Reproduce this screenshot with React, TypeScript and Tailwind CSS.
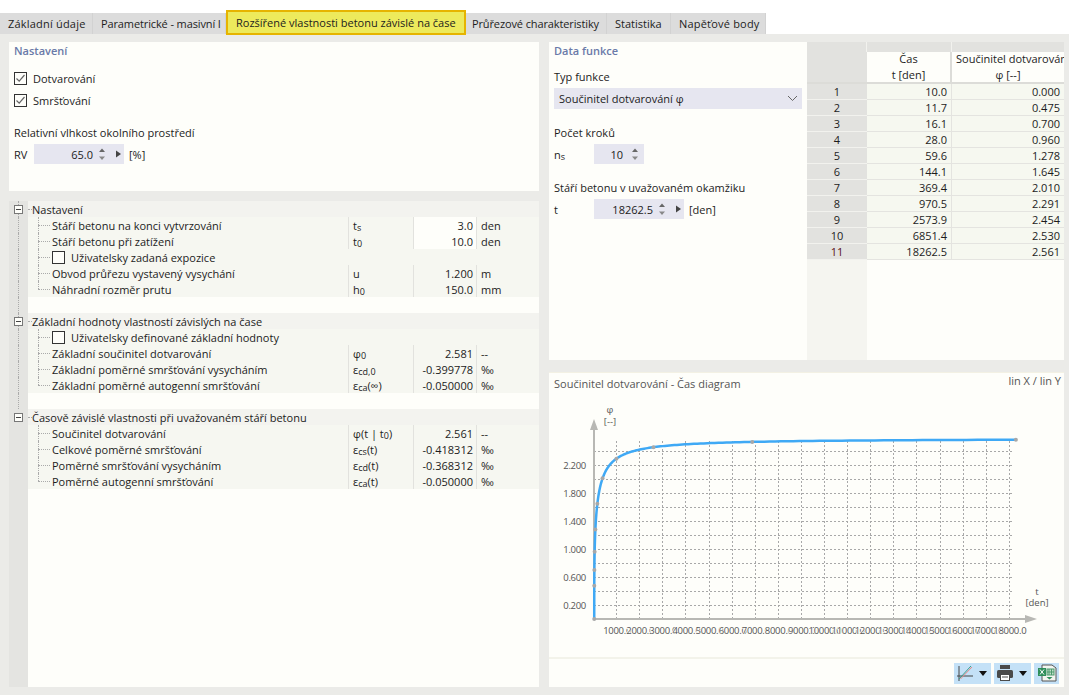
const font = "font-['Open_Sans',sans-serif]";

function Sub({ base, sub, rest }: { base: string; sub: string; rest?: string }) {
  return (
    <span>
      {base}
      <span className="relative top-[1px] text-[9px]">{sub}</span>
      {rest}
    </span>
  );
}

function Check({ checked }: { checked?: boolean }) {
  return (
    <span className="flex h-[13px] w-[13px] shrink-0 items-center justify-center border border-[#333] bg-[#fefefa]">
      {checked && (
        <svg width="11" height="11" viewBox="0 0 11 11">
          <path d="M1.5 5.5 L4.2 8.2 L9.5 2" fill="none" stroke="#666" strokeWidth="1.2" />
        </svg>
      )}
    </span>
  );
}

function Spinner({ arrow }: { arrow?: boolean }) {
  return (
    <svg width={arrow ? 28 : 12} height="14" viewBox={arrow ? '0 0 28 14' : '0 0 12 14'} className="shrink-0">
      <path d="M3 5 L6 1.5 L9 5 Z" fill="#666" />
      <path d="M3 9.500 L9 9.500 L6 13 Z" fill="#888" />
      {arrow && <path d="M20 3.500 L25 7 L20 10.500 Z" fill="#444" />}
    </svg>
  );
}

const tabs = [
  { label: 'Základní údaje', w: 'w-[93px] pl-[8px] tracking-[0.2px]' },
  { label: 'Parametrické - masivní I', w: 'w-[133px] pl-[8px] tracking-[-0.12px]' },
];
const tabsAfter = [
  { label: 'Průřezové charakteristiky', w: 'w-[141px] pl-[6px] tracking-[-0.12px]' },
  { label: 'Statistika', w: 'w-[64px] pl-[8px]' },
  { label: 'Napěťové body', w: 'w-[95px] pl-[8px] tracking-[0.2px]' },
];

function Tab({ label, w }: { label: string; w: string }) {
  return (
    <div className={`mt-[3px] flex h-[21px] items-center border-r border-[#d2d2d2] bg-[#dcdcdc] whitespace-nowrap ${w}`}>
      {label}
    </div>
  );
}

type Row = { label: React.ReactNode; sym?: React.ReactNode; val?: string; unit?: string; check?: boolean; edit?: boolean };

const groups: { title: string; rows: Row[] }[] = [
  {
    title: 'Nastavení',
    rows: [
      { label: 'Stáří betonu na konci vytvrzování', sym: <Sub base="t" sub="s" />, val: '3.0', unit: 'den', edit: true },
      { label: 'Stáří betonu při zatížení', sym: <Sub base="t" sub="0" />, val: '10.0', unit: 'den', edit: true },
      { label: 'Uživatelsky zadaná expozice', check: true },
      { label: 'Obvod průřezu vystavený vysychání', sym: 'u', val: '1.200', unit: 'm' },
      { label: 'Náhradní rozměr prutu', sym: <Sub base="h" sub="0" />, val: '150.0', unit: 'mm' },
    ],
  },
  {
    title: 'Základní hodnoty vlastností závislých na čase',
    rows: [
      { label: 'Uživatelsky definované základní hodnoty', check: true },
      { label: 'Základní součinitel dotvarování', sym: <Sub base="φ" sub="0" />, val: '2.581', unit: '--' },
      { label: 'Základní poměrné smršťování vysycháním', sym: <Sub base="ε" sub="cd,0" />, val: '-0.399778', unit: '‰' },
      { label: 'Základní poměrné autogenní smršťování', sym: <Sub base="ε" sub="ca" rest="(∞)" />, val: '-0.050000', unit: '‰' },
    ],
  },
  {
    title: 'Časově závislé vlastnosti při uvažovaném stáří betonu',
    rows: [
      { label: 'Součinitel dotvarování', sym: <span>φ(t | t<span className="relative top-[1px] text-[9px]">0</span>)</span>, val: '2.561', unit: '--' },
      { label: 'Celkové poměrné smršťování', sym: <Sub base="ε" sub="cs" rest="(t)" />, val: '-0.418312', unit: '‰' },
      { label: 'Poměrné smršťování vysycháním', sym: <Sub base="ε" sub="cd" rest="(t)" />, val: '-0.368312', unit: '‰' },
      { label: 'Poměrné autogenní smršťování', sym: <Sub base="ε" sub="ca" rest="(t)" />, val: '-0.050000', unit: '‰' },
    ],
  },
];

function Gutter({ line, children }: { line?: boolean; children?: React.ReactNode }) {
  return (
    <div className="relative h-full w-[19px] shrink-0 bg-[#e4e4e1]">
      {line && <div className="ml-[9px] h-full border-l border-dotted border-[#aaa]" />}
      {children}
    </div>
  );
}

function TreeGroup({ title, rows, last }: { title: string; rows: Row[]; last: boolean }) {
  return (
    <div>
      <div className="flex h-[16px]">
        <Gutter line={!last}>
          <span className="absolute top-[4px] left-[5px] flex h-[9px] w-[9px] items-center justify-center border border-[#777] bg-[#fefefa]">
            <span className="h-px w-[5px] bg-[#444]" />
          </span>
        </Gutter>
        <div className="flex flex-1 items-center bg-[#f3f3ef] whitespace-nowrap">
          <span className="w-[4px] border-t border-dotted border-[#aaa]" />
          {title}
        </div>
      </div>
      {rows.map((r, i) => (
        <div key={i} className="flex h-[16px]">
          <Gutter line={!last} />
          <div className="flex flex-1 items-center bg-[#f6f7f1]">
            <div className="relative h-full w-[24px] shrink-0">
              <div className={`absolute top-0 left-[10px] border-l border-dotted border-[#aaa] ${i === rows.length - 1 ? 'h-[8px]' : 'h-[16px]'}`} />
              <div className="absolute top-[8px] left-[10px] w-[12px] border-t border-dotted border-[#aaa]" />
            </div>
            {r.check ? (
              <div className="flex items-center gap-[6px] whitespace-nowrap">
                <Check />
                {r.label}
              </div>
            ) : (
              <>
                <div className="w-[296px] shrink-0 whitespace-nowrap">{r.label}</div>
                <div className="flex h-full w-[65px] shrink-0 items-center border-l border-[#e2e2de] pl-[4px] whitespace-nowrap">{r.sym}</div>
                <div className={`flex h-full w-[63px] shrink-0 items-center justify-end border-l border-[#e2e2de] pr-[3px] ${r.edit ? 'bg-[#fefefa]' : ''}`}>{r.val}</div>
                <div className="flex h-full flex-1 items-center border-l border-[#e2e2de] pl-[4px]">{r.unit}</div>
              </>
            )}
          </div>
        </div>
      ))}
      {!last && (
        <div className="h-[16px]">
          <Gutter line />
        </div>
      )}
    </div>
  );
}

const tableRows = [
  ['10.0', '0.000'],
  ['11.7', '0.475'],
  ['16.1', '0.700'],
  ['28.0', '0.960'],
  ['59.6', '1.278'],
  ['144.1', '1.645'],
  ['369.4', '2.010'],
  ['970.5', '2.291'],
  ['2573.9', '2.454'],
  ['6851.4', '2.530'],
  ['18262.5', '2.561'],
];

const px = (t: number) => 594 + t * 0.0231;
const py = (v: number) => 618 - v * 70;

function curvePath() {
  const pts: string[] = [];
  for (let i = 0; i <= 240; i++) {
    const t = 10 * Math.pow(18262.5 / 10, i / 240);
    const d = t - 10;
    const v = 2.581 * Math.pow(d / (470 + d), 0.3);
    pts.push(`${px(t).toFixed(2)},${py(v).toFixed(2)}`);
  }
  return pts.join(' ');
}

function Chart() {
  const xs = Array.from({ length: 18 }, (_, i) => i + 1);
  const ys = Array.from({ length: 12 }, (_, i) => (i + 1) * 0.2);
  const yLabels = [0.2, 0.6, 1.0, 1.4, 1.8, 2.2];
  return (
    <svg width="515" height="285" className="block">
      <g transform="translate(-549 -372)" fontFamily="Open Sans, sans-serif" fontSize="9.5" fill="#555">
        {ys.map((v) => (
          <line key={v} x1="594" x2="1014" y1={Math.round(py(v)) + 0.5} y2={Math.round(py(v)) + 0.5} stroke="#a8a8a8" strokeDasharray="2 2" shapeRendering="crispEdges" />
        ))}
        {xs.map((k) => (
          <line key={k} x1={Math.round(594 + k * 23.1) - 0.5} x2={Math.round(594 + k * 23.1) - 0.5} y1="440" y2="618" stroke="#a8a8a8" strokeDasharray="2 2" shapeRendering="crispEdges" />
        ))}
        <line x1="594" x2="594" y1="424" y2="618" stroke="#b8b8b4" strokeWidth="2" />
        <line x1="593" x2="1028" y1="618" y2="618" stroke="#b8b8b4" strokeWidth="2" />
        <path d="M594 418 L598 429 L590 429 Z" fill="#b8b8b4" />
        <path d="M1037 618 L1025 614 L1025 622 Z" fill="#b8b8b4" />
        <polyline points={curvePath()} fill="none" stroke="#3fa9f5" strokeWidth="2.5" />
        {tableRows.map(([t, v]) => (
          <circle key={t} cx={px(parseFloat(t))} cy={py(parseFloat(v))} r="2" fill="#a8a8a8" />
        ))}
        {yLabels.map((v) => (
          <text key={v} x="586" y={py(v) + 3.5} textAnchor="end" fontSize="9.5" letterSpacing="-0.3">
            {v.toFixed(3)}
          </text>
        ))}
        {xs.map((k) => (
          <text key={k} x={594 + k * 23.1} y="632.5" textAnchor="middle" letterSpacing="-0.3" stroke="#fefefa" strokeWidth="1.5" paintOrder="stroke">
            {(k * 1000).toFixed(1)}
          </text>
        ))}
        <text x="610" y="412" textAnchor="middle">φ</text>
        <text x="610" y="424" textAnchor="middle">[--]</text>
        <text x="1037" y="594" textAnchor="middle">t</text>
        <text x="1037" y="605" textAnchor="middle">[den]</text>
      </g>
    </svg>
  );
}

export default function App() {
  return (
    <div className={`h-[695px] w-[1069px] overflow-hidden bg-white text-[11px] leading-none text-[#1c1c1c] ${font}`}>
      <div className="flex h-[34px] pt-[10px]">
        {tabs.map((t) => (
          <Tab key={t.label} {...t} />
        ))}
        <div className="relative z-10 flex h-[25px] w-[240px] items-center border-2 border-[#e6b400] bg-[#edea5c] pl-[8px] whitespace-nowrap">
          Rozšířené vlastnosti betonu závislé na čase
        </div>
        {tabsAfter.map((t) => (
          <Tab key={t.label} {...t} />
        ))}
      </div>

      <div className="flex h-[661px] gap-[10px] bg-[#ebebe8] pt-[8px] pr-[5px] pb-[8px] pl-[9px]">
        <div className="flex w-[530px] flex-col gap-[10px]">
          <div className="h-[149px] bg-[#fefefa] pt-[3px] pl-[5px]">
            <div className="font-semibold text-[#6a7aa8]">Nastavení</div>
            <div className="mt-[16px] flex items-center gap-[6px]">
              <Check checked />
              Dotvarování
            </div>
            <div className="mt-[9px] flex items-center gap-[6px]">
              <Check checked />
              Smršťování
            </div>
            <div className="mt-[20px]">Relativní vlhkost okolního prostředí</div>
            <div className="mt-[6px] flex items-center">
              <span className="w-[20px]">RV</span>
              <div className="flex h-[20px] w-[90px] items-center justify-end bg-[#e6e6f0]">
                <span className="mr-[3px]">65.0</span>
                <Spinner arrow />
              </div>
              <span className="ml-[5px]">[%]</span>
            </div>
          </div>

          <div className="flex min-h-0 flex-1 flex-col bg-[#fefefa]">
            {groups.map((g, i) => (
              <TreeGroup key={g.title} title={g.title} rows={g.rows} last={i === groups.length - 1} />
            ))}
            <div className="min-h-0 w-[19px] flex-1 bg-[#e4e4e1]" />
          </div>
        </div>

        <div className="flex flex-1 flex-col gap-[12px]">
          <div className="flex h-[318px]">
            <div className="w-[258px] bg-[#fefefa] pt-[3px] pl-[5px]">
              <div className="font-semibold text-[#6a7aa8]">Data funkce</div>
              <div className="mt-[15px]">Typ funkce</div>
              <div className="mt-[6px] flex h-[21px] w-[248px] items-center justify-between bg-[#e6e6f0] pr-[4px] pl-[5px]">
                Součinitel dotvarování φ
                <svg width="11" height="7" viewBox="0 0 11 7">
                  <path d="M1 1 L5.500 5.500 L10 1" fill="none" stroke="#666" />
                </svg>
              </div>
              <div className="mt-[18px]">Počet kroků</div>
              <div className="mt-[6px] flex items-center">
                <span className="w-[40px]">
                  <Sub base="n" sub="s" />
                </span>
                <div className="flex h-[20px] w-[50px] items-center justify-end bg-[#e6e6f0] pr-[3px]">
                  <span className="mr-[6px]">10</span>
                  <Spinner />
                </div>
              </div>
              <div className="mt-[18px]">Stáří betonu v uvažovaném okamžiku</div>
              <div className="mt-[6px] flex items-center">
                <span className="w-[40px]">t</span>
                <div className="flex h-[20px] w-[90px] items-center justify-end bg-[#e6e6f0]">
                  <span className="mr-[3px]">18262.5</span>
                  <Spinner arrow />
                </div>
                <span className="ml-[5px]">[den]</span>
              </div>
            </div>

            <div className="flex w-[257px] flex-col bg-[#fefefa]">
              <div className="flex h-[10px] shrink-0 bg-[#e2e2df]">
                <div className="w-[60px] border-r border-[#f2f2ee]" />
                <div className="w-[85px] border-r border-[#f2f2ee]" />
              </div>
              <div className="flex h-[32px] shrink-0 border-b-2 border-[#dcdcd8] text-center">
                <div className="w-[60px] bg-[#e2e2df]" />
                <div className="flex w-[85px] flex-col justify-center gap-[5px] border-r-2 border-[#dcdcd8] pb-[2px]">
                  <span>Čas</span>
                  <span>t [den]</span>
                </div>
                <div className="flex flex-1 flex-col justify-center gap-[5px] overflow-hidden pb-[2px]">
                  <span className="pl-[4px] text-left whitespace-nowrap">Součinitel dotvarování</span>
                  <span>φ [--]</span>
                </div>
              </div>
              {tableRows.map(([t, v], i) => (
                <div key={t} className="flex h-[16px] shrink-0">
                  <div className={`flex w-[60px] items-center justify-center border-b border-[#f2f2ee] bg-[#e2e2df] ${i === 10 ? 'text-[#5a1018]' : ''}`}>{i + 1}</div>
                  <div className="flex w-[85px] items-center justify-end border-r border-b border-[#e4e4e0] bg-[#f6f8f0] pr-[4px]">{t}</div>
                  <div className="flex flex-1 items-center justify-end border-b border-[#e4e4e0] bg-[#f6f8f0] pr-[4px]">{v}</div>
                </div>
              ))}
              <div className="min-h-0 w-[60px] flex-1 bg-[#f5f5f0]" />
            </div>
          </div>

          <div className="flex min-h-0 flex-1 flex-col bg-[#fefefa]">
            <div className="relative h-[285px] border-t border-[#f3f1e4]">
              <div className="absolute top-[5px] left-[5px] text-[#555]">Součinitel dotvarování - Čas diagram</div>
              <div className="absolute top-[2px] right-[3px] text-[#555]">lin X / lin Y</div>
              <Chart />
            </div>
            <div className="flex flex-1 items-center justify-end gap-[3px] border-t-2 border-[#f3f3ea] pr-[5px]">
              <div className="flex h-[21px] w-[37px] items-center justify-between bg-[#c4e1f7] px-[2px]">
                <svg width="18" height="18" viewBox="0 0 18 18">
                  <path d="M3 2 V17 M1 12 H17" stroke="#444" fill="none" />
                  <path d="M3 15 L15 2" stroke="#3a9b8a" fill="none" />
                  <path d="M4.500 15 L16 3" stroke="#e58a8a" fill="none" />
                </svg>
                <svg width="8" height="5" viewBox="0 0 8 5" className="mr-[2px]">
                  <path d="M0 0 H8 L4 5 Z" fill="#111" />
                </svg>
              </div>
              <div className="flex h-[21px] w-[37px] items-center justify-between bg-[#c4e1f7] px-[2px]">
                <svg width="18" height="18" viewBox="0 0 18 18">
                  <rect x="4" y="1" width="10" height="4" fill="#4a4a4a" />
                  <rect x="1" y="6" width="16" height="8" rx="1.5" fill="#4a4a4a" />
                  <rect x="4.500" y="10.500" width="9" height="6" fill="#fff" stroke="#4a4a4a" />
                  <path d="M6 13 H12" stroke="#4a4a4a" />
                </svg>
                <svg width="8" height="5" viewBox="0 0 8 5" className="mr-[2px]">
                  <path d="M0 0 H8 L4 5 Z" fill="#111" />
                </svg>
              </div>
              <div className="flex h-[21px] w-[25px] items-center justify-center bg-[#c4e1f7]">
                <svg width="20" height="18" viewBox="0 0 20 18">
                  <path d="M5 1 H15 L19 4 V17 H5 Z" fill="#f2f5f0" stroke="#555" />
                  <rect x="1" y="4" width="8" height="8" fill="#2f8f5b" />
                  <path d="M3 5.500 L7 10.500 M7 5.500 L3 10.500" stroke="#fff" />
                  <rect x="10" y="5" width="7" height="6" fill="#bfe0c8" stroke="#4c9a6e" />
                  <path d="M12 5 V11 M14.500 5 V11 M10 8 H17" stroke="#4c9a6e" />
                  <path d="M9.500 13 H15.500 L12.500 15.500 Z" fill="#2f8f5b" />
                </svg>
              </div>
            </div>
          </div>
        </div>
      </div>
    </div>
  );
}
